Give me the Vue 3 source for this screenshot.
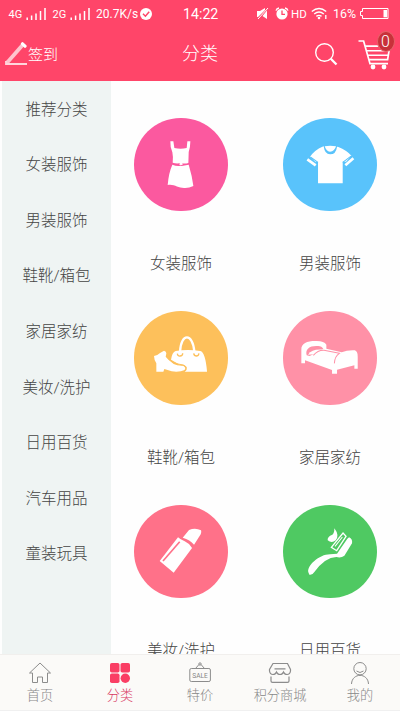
<script setup>
import { ref } from 'vue'

const categories = ['推荐分类', '女装服饰', '男装服饰', '鞋靴/箱包', '家居家纺', '美妆/洗护', '日用百货', '汽车用品', '童装玩具']
const products = [
  { name: '女装服饰', icon: 'dress', box: '29 38 280 280' },
  { name: '男装服饰', icon: 'shirt', box: '25 38 280 280' },
  { name: '鞋靴/箱包', icon: 'bag', box: '29 33 280 280' },
  { name: '家居家纺', icon: 'bed', box: '25 33 280 280' },
  { name: '美妆/洗护', icon: 'lipstick', box: '29 28 280 280' },
  { name: '日用百货', icon: 'brush', box: '25 28 280 280' },
]
const tabs = [
  { name: '首页', icon: 'home' },
  { name: '分类', icon: 'grid' },
  { name: '特价', icon: 'sale' },
  { name: '积分商城', icon: 'shop' },
  { name: '我的', icon: 'user' },
]
const active = ref('分类')
</script>

<template>
  <div class="app">
    <header class="header">
      <div class="status">
        <span class="net">4G</span>
        <svg class="signal" viewBox="0 0 22 14"><path d="M1.2 13V10.5M5.6 13V8.5M10 13V6.5M14.5 13V4M19 13V1" /></svg>
        <span class="net">2G</span>
        <svg class="signal" viewBox="0 0 22 14"><path d="M1.2 13V10.5M5.6 13V8.5M10 13V6.5M14.5 13V4M19 13V1" /></svg>
        <span class="speed">20.7K/s</span>
        <svg class="check" viewBox="0 0 12 12"><circle cx="6" cy="6" r="6" fill="#fff" /><path d="M3 5.8L5.4 8.2L9.2 3.8" fill="none" stroke="#ff4569" stroke-width="1.5" /></svg>
        <span class="clock">14:22</span>
        <svg class="mute" viewBox="0 0 12 13"><path d="M0 4H3L8 1V3L1 10H0ZM10 3.5V12L5.5 9Z" fill="#fff" /><path d="M1 12L11 1" stroke="#fff" /></svg>
        <svg class="alarm" viewBox="0 0 14 13"><circle cx="7" cy="7" r="5.6" fill="#fff" /><path d="M1 3.6Q1.6 1.5 4 1M13 3.6Q12.4 1.5 10 1" fill="none" stroke="#fff" stroke-width="1.3" /><path d="M7 3.5V7.3H10" fill="none" stroke="#ff4569" stroke-width="1.3" /></svg>
        <span class="hd">HD</span>
        <svg class="wifi" viewBox="0 0 17 13"><path d="M.8 4.5Q8 -1.5 15.2 4.5M3.2 7Q8 3 12.8 7M5.4 9.4Q8 7.3 10.5 9.4" fill="none" stroke="#fff" stroke-width="1.4" /><circle cx="8" cy="11" r="1.3" fill="#fff" /><path d="M14.8 8V12" stroke="#fff" stroke-width="1.3" /></svg>
        <span class="percent">16%</span>
        <svg class="battery" viewBox="0 0 29 13"><path d="M2.5 1.5H28V11.5H2.5V8.5H.5V4.5H2.5Z" fill="none" stroke="#fff" stroke-width="1" /><path d="M23.5 3H27V10.3H23.5Z" fill="#fff" /></svg>
      </div>
      <div class="titlebar">
        <div class="sign">
          <svg viewBox="0 0 23 24"><path d="M1.8 21L18.5 2" stroke="#ffc4ce" stroke-width="3.8" /><path d="M17.5 1.8L20 4.2" stroke="#fff" stroke-width="3.2" stroke-linecap="round" /><path d="M1 19V22H22" fill="none" stroke="#ffd5dc" stroke-width="1.8" /></svg>
          <span>签到</span>
        </div>
        <h1>分类</h1>
        <div class="actions">
          <svg class="search" viewBox="0 0 23 23"><circle cx="9.5" cy="9.5" r="8.8" fill="none" stroke="#fff" stroke-width="1.4" /><path d="M15.8 15.8L21.5 21.5" stroke="#fff" stroke-width="2.3" /></svg>
          <div class="cart">
            <svg viewBox="0 0 34 32"><path d="M.5 3H5.6L12 25.7H30M7.3 8.2H31.8L29.6 21.6H11" fill="none" stroke="#fff" stroke-width="1.7" /><path d="M8.8 12.7H31M9.8 17.2H30" stroke="#fff" stroke-width="1.6" /><circle cx="15" cy="29" r="2.4" fill="#fff" /><circle cx="26" cy="29" r="2.4" fill="#fff" /></svg>
            <span class="badge">0</span>
          </div>
        </div>
      </div>
    </header>

    <div class="body">
      <nav class="sidebar">
        <div v-for="item in categories" :key="item" class="side-item">{{ item }}</div>
      </nav>
      <main class="products">
        <div v-for="p in products" :key="p.name" class="product">
          <div class="disc" :class="p.icon">
            <svg :viewBox="p.box" fill="#fff">
              <g v-if="p.icon === 'dress'">
                <path d="M138 108H147L150 128Q169 132 187 128L189 108H198Q198 124 193 140L192 173Q180 176 170 173Q157 176 145 172Q147 155 144 141Q137 126 138 108Z" />
                <path d="M144 178Q157 183 168 181L172 182L193 178Q203 211 207 242Q193 249 179 248C161 248 149 235 130 239Q133 202 144 178Z" />
                <path d="M164 177L170 170L176 177L170 180Z" />
              </g>
              <g v-else-if="p.icon === 'shirt'">
                <path d="M143 124L147 123Q150 147 166 147Q184 147 187 124L191 125Q216 135 230 151L214 169L204 169V234H130V170L122 169L106 154Q121 133 143 124Z" />
                <path d="M150 123Q166 119 184 123Q180 138 166 139Q154 138 150 123Z" />
                <path d="M98 162L123 180M212 180L236 159" fill="none" stroke="#fff" stroke-width="8" />
                <path d="M107 155L130 171M204 171L229 152" fill="none" stroke="#59c3fb" stroke-width="3" />
              </g>
              <g v-else-if="p.icon === 'bag'">
                <path d="M167 155C170 98 205 98 210 155" fill="none" stroke="#fff" stroke-width="7" />
                <path d="M154 153Q190 147 228 153Q243 157 248 215H181Q189 209 187 201Q178 192 166 194L140 179Q143 157 154 153Z" />
                <path d="M89 168Q99 167 107 159L119 152Q126 154 126 160L124 170Q133 181 148 192Q159 198 177 197Q189 203 181 210Q166 217 142 214L120 207L117 215H96V190Q89 179 89 168Z" />
                <path d="M159 161Q160 169 167 168Q175 168 175 160M208 160Q209 168 217 168Q224 167 223 160" fill="none" stroke="#fdc05b" stroke-width="4" />
                <path d="M126 168Q142 192 176 195Q191 203 180 213" fill="none" stroke="#fdc05b" stroke-width="3.5" />
                <circle cx="168" cy="162" r="3" /><circle cx="216" cy="162" r="3" />
              </g>
              <g v-else-if="p.icon === 'bed'">
                <path d="M80 190V149C79 130 97 123 122 123Q148 122 155 134V146L201 157Q217 150 240 151Q249 153 249 170V206H239V196L187 209V221H172V210L91 181V190Z" />
                <path d="M96 166C91 147 105 137 128 138Q141 137 146 147Q129 150 117 162L105 168Z" fill="#ff91a7" />
                <path d="M100 164Q112 147 141 149L118 163Z" />
                <path d="M116 166Q130 150 148 151L194 160Q180 169 179 190" fill="none" stroke="#ff91a7" stroke-width="3" />
              </g>
              <g v-else-if="p.icon === 'lipstick'">
                <path d="M161 125Q168 132 181 137Q195 143 203 157L148 231L106 196Z" />
                <path d="M175 126L194 103Q213 95 230 104Q232 110 229 116L209 147Q197 132 175 126Z" />
                <path d="M116 196L166 138" stroke="#ff7189" stroke-width="5" />
              </g>
              <g v-else>
                <path d="M101 230C96 211 133 176 166 176L187 174L218 129L223 125Q234 130 232 143L209 180Q199 188 185 184Q151 185 119 229Q113 239 104 237Z" />
                <path d="M179 98Q195 119 183 134Q171 144 159 134Q157 123 173 117Q179 113 179 98Z" />
                <path d="M170 155L205 112L214 122L186 165Z" fill="#4fc962" stroke="#fff" stroke-width="4" />
                <path d="M181 152L203 124" stroke="#fff" stroke-width="3" />
              </g>
            </svg>
          </div>
          <div class="label">{{ p.name }}</div>
        </div>
      </main>
    </div>

    <footer class="tabs">
      <div v-for="t in tabs" :key="t.name" class="tab" :class="{ active: t.name === active }" @click="active = t.name">
        <svg viewBox="0 0 24 24" fill="none" stroke="#8c8c8c" stroke-width="1">
          <path v-if="t.icon === 'home'" d="M1.5 12L12 2L22.5 12H19.5V21.5H14.5V16H9.5V21.5H4.5V12Z" />
          <g v-else-if="t.icon === 'grid'" fill="#fa3e64" stroke="none">
            <rect x="2" y="2" width="9.5" height="9.5" rx="1.8" /><rect x="12.5" y="2" width="9.5" height="9.5" rx="1.8" /><rect x="2" y="12.5" width="9.5" height="9.5" rx="1.8" /><circle cx="17.3" cy="17.2" r="4.7" />
          </g>
          <g v-else-if="t.icon === 'sale'">
            <rect x="1.8" y="7.5" width="20.6" height="13" rx="1.5" /><path d="M7.5 7.5L11 3.5M16.5 7.5L13 3.5" /><circle cx="12" cy="3" r="1.2" /><text x="12" y="16.6" text-anchor="middle" textLength="15.5" lengthAdjust="spacingAndGlyphs" class="sale-text">SALE</text>
          </g>
          <g v-else-if="t.icon === 'shop'" stroke-width="1.2">
            <path d="M5 2.5H19.5L22.5 8.5V10Q22 13.5 19 13.5Q16.5 13.5 15.5 11Q14.5 13.5 12 13.5Q9.5 13.5 8.5 11Q7.5 13.5 5 13.5Q2 13.5 1.5 10V8.5ZM6.5 7.8H17.5M3 15.5V20Q3 21.3 4.5 21.3H19.5Q21 21.3 21 20V15.5" />
          </g>
          <g v-else><circle cx="12" cy="7.7" r="6.2" /><path d="M8.5 10Q12 13 15.5 10M3.5 23C4 11.5 20 11.5 20.5 23" /></g>
        </svg>
        <span>{{ t.name }}</span>
      </div>
    </footer>
  </div>
</template>

<style>
body { overflow: hidden; background: #fff; }
</style>

<style scoped>
.app { width: 400px; height: 711px; display: flex; flex-direction: column; overflow: hidden; background: #fefefe; font-family: Roboto, "Noto Sans CJK SC", sans-serif; font-weight: 300; }
svg { display: block; }
.header { height: 81px; flex: none; background: #ff4569; color: #fff; }
.status { height: 27px; padding-left: 8.5px; display: grid; grid-template-columns: 17.5px 26.5px 17.5px 26px 44px 43px 73.5px 18px 16.5px 20px 22px 27px 30px; align-items: center; white-space: nowrap; font-weight: 400; line-height: 14px; }
.net { font-size: 11px; padding-top: 2px; }
.signal { width: 22px; height: 14px; fill: none; stroke: #fff; stroke-width: 1.5; }
.speed { font-size: 12px; }
.check { width: 12px; height: 12px; }
.clock { font-size: 14.2px; }
.mute { width: 12px; height: 13px; }
.alarm { width: 14px; height: 13px; }
.hd { font-size: 11.5px; }
.wifi { width: 17px; height: 13px; }
.percent { font-size: 12.4px; }
.battery { width: 29px; height: 13px; }
.titlebar { height: 54px; display: grid; grid-template-columns: 1fr auto 1fr; align-items: center; }
.sign { display: flex; align-items: center; padding-left: 5px; font-size: 15px; }
.sign svg { width: 23px; height: 24px; }
.sign span { padding-bottom: 2px; }
h1 { margin: 0; font-size: 18px; line-height: 26px; font-weight: 300; }
.actions { display: flex; align-items: center; justify-content: flex-end; padding-right: 8px; }
.search { width: 23px; height: 23px; margin-right: 20px; }
.cart { position: relative; width: 34px; height: 32px; }
.cart svg { width: 34px; height: 32px; }
.badge { position: absolute; left: 18.5px; top: -7px; width: 16px; height: 19px; border: 1px solid #e66269; border-radius: 50%; background: #c8313a; text-align: center; font-size: 16px; line-height: 20px; }
.body { height: 573px; flex: none; display: flex; overflow: hidden; }
.sidebar { width: 109px; margin-left: 2px; flex: none; box-sizing: border-box; padding-top: 1.6px; background: #eff4f3; }
.side-item { height: 55.6px; line-height: 55.6px; text-align: center; font-size: 15.5px; color: #444; }
.products { display: grid; grid-template-columns: 93px 93px; grid-auto-rows: 193.3px; column-gap: 56px; align-content: start; padding: 37px 0 0 23.5px; }
.product { display: flex; flex-direction: column; align-items: center; }
.disc { width: 93.4px; height: 93.4px; flex: none; border-radius: 50%; }
.disc svg { width: 100%; height: 100%; }
.dress { background: #fb599f; }
.shirt { background: #59c3fb; }
.bag { background: #fdc05b; }
.bed { background: #ff91a7; }
.lipstick { background: #ff7189; }
.brush { background: #4fc962; }
.label { margin-top: 41px; line-height: 24px; font-size: 15.5px; color: #444; white-space: nowrap; }
.tabs { height: 57px; flex: none; box-sizing: border-box; display: grid; grid-template-columns: repeat(5, 80px); border-top: 1px solid #f1efed; border-bottom: 1px solid #f0f0f0; background: #fbfaf8; }
.tab { display: flex; flex-direction: column; align-items: center; padding-top: 6px; font-size: 13.2px; line-height: 18px; color: #888; }
.tab svg { width: 24px; height: 24px; margin-bottom: 1.5px; }
.tab.active { color: #d8365f; }
.sale-text { font-size: 6.5px; fill: #858585; stroke: none; font-weight: 400; }
</style>
